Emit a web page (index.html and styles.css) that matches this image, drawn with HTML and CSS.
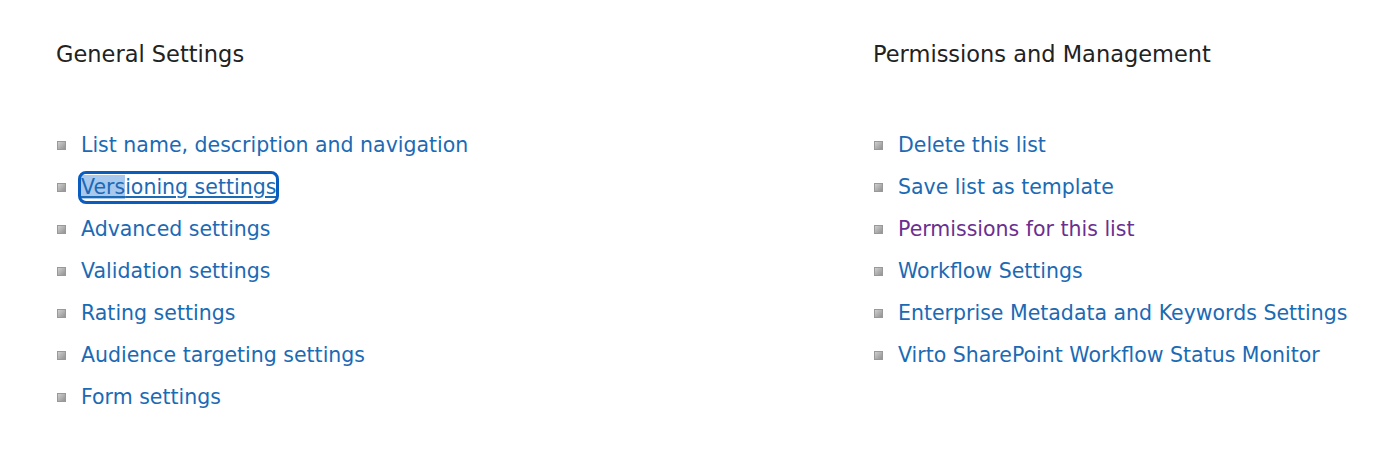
FILE: index.html
```html
<!DOCTYPE html>
<html lang="en">
<head>
  <meta charset="UTF-8">
  <title>List Settings</title>
  <link rel="stylesheet" href="styles.css">
</head>
<body>
  <div class="settings-page">
    <div class="settings-column">
      <h3 class="settings-title">General Settings</h3>
      <ul class="settings-list">
        <li><a href="#">List name, description and navigation</a></li>
        <li><a href="#" class="focused"><span class="selected">Vers</span>ioning settings</a></li>
        <li><a href="#">Advanced settings</a></li>
        <li><a href="#">Validation settings</a></li>
        <li><a href="#">Rating settings</a></li>
        <li><a href="#">Audience targeting settings</a></li>
        <li><a href="#">Form settings</a></li>
      </ul>
    </div>
    <div class="settings-column">
      <h3 class="settings-title">Permissions and Management</h3>
      <ul class="settings-list">
        <li><a href="#">Delete this list</a></li>
        <li><a href="#">Save list as template</a></li>
        <li><a href="#" class="visited">Permissions for this list</a></li>
        <li><a href="#">Workflow Settings</a></li>
        <li><a href="#">Enterprise Metadata and Keywords Settings</a></li>
        <li><a href="#">Virto SharePoint Workflow Status Monitor</a></li>
      </ul>
    </div>
  </div>
</body>
</html>
```

FILE: styles.css
```css
body {
  margin: 0;
  background: #ffffff;
  font-family: "DejaVu Sans", Verdana, sans-serif;
}

.settings-page {
  display: grid;
  grid-template-columns: 817px 1fr;
  padding: 38px 0 0 56px;
}

.settings-title {
  margin: 0 0 54px;
  font-size: 22.5px;
  font-weight: normal;
  line-height: 32px;
  color: #222222;
}

.settings-list {
  list-style: none;
  margin: 0;
  padding: 0;
}

.settings-list li {
  display: flex;
  align-items: center;
  height: 42px;
}

.settings-list li::before {
  content: "";
  width: 9px;
  height: 9px;
  margin: 0 15px 0 1px;
  background: linear-gradient(135deg, #d8d8d8, #8a8a8a);
  box-shadow: inset 0 0 0 1px #999999;
}

.settings-list a {
  font-size: 20.5px;
  line-height: 27px;
  color: #1b6ab4;
  text-decoration: none;
}

.settings-list a.visited {
  color: #6a2f8f;
}

.settings-list a.focused {
  text-decoration: underline;
  outline: 3px solid #0a5cbf;
  outline-offset: 0;
  border-radius: 5px;
}

.selected {
  background: #a9c8ee;
}
```
